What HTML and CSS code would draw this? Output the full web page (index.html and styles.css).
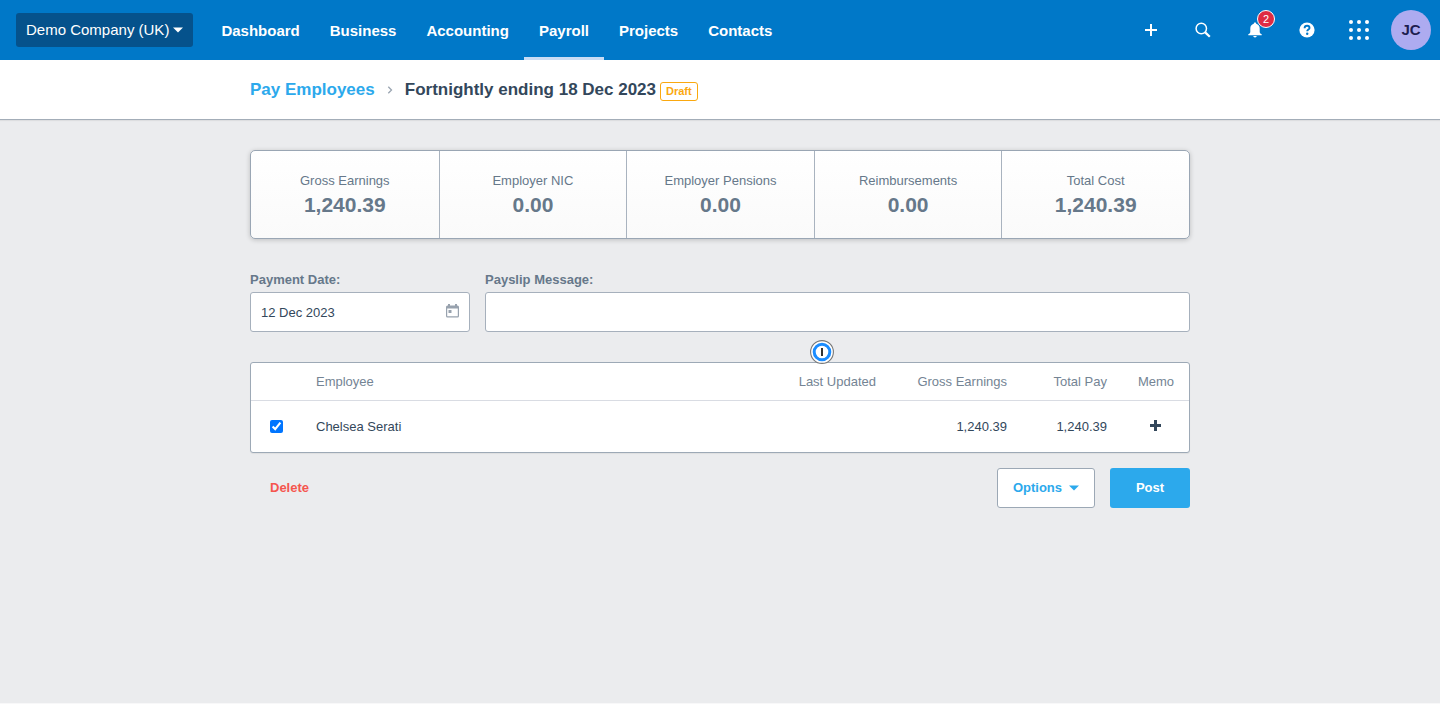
FILE: index.html
```html
<!DOCTYPE html>
<html lang="en-GB">
<head>
<meta charset="utf-8">
<title>Pay Employees</title>
<link rel="stylesheet" href="styles.css">
</head>
<body>
<header class="topbar">
  <button class="org" type="button">Demo Company (UK)
    <svg class="caret" viewBox="0 0 10 6" width="10" height="6" aria-hidden="true"><path d="M0 0.500h10L5 5.500z" fill="currentColor"/></svg>
  </button>
  <nav class="nav">
    <a href="#">Dashboard</a>
    <a href="#">Business</a>
    <a href="#">Accounting</a>
    <a href="#" class="active" aria-current="page">Payroll</a>
    <a href="#">Projects</a>
    <a href="#">Contacts</a>
  </nav>
  <div class="tools">
    <button class="tool" type="button" aria-label="Create new">
      <svg viewBox="0 0 20 20" width="20" height="20"><path d="M10 4v12M4 10h12" stroke="currentColor" stroke-width="2"/></svg>
    </button>
    <button class="tool" type="button" aria-label="Search">
      <svg viewBox="0 0 20 20" width="20" height="20" fill="none" stroke="currentColor"><circle cx="8.3" cy="8.5" r="5.2" stroke-width="1.5"/><path d="M12.2 12.4l4.6 4.4" stroke-width="2.2"/></svg>
    </button>
    <button class="tool" type="button" aria-label="Notifications">
      <svg viewBox="0 0 20 20" width="20" height="20" fill="currentColor"><path d="M10 2.600c.8 0 1.200.5 1.200 1.200 2.300.6 3.500 2.300 3.500 4.600v3.300c0 1.100.5 1.800 2 2.600v1H3.300v-1c1.500-.8 2-1.500 2-2.600V8.400c0-2.300 1.200-4 3.500-4.600 0-.7.4-1.200 1.200-1.200z"/><path d="M8.200 16h3.600c-.2.900-.8 1.400-1.800 1.400s-1.600-.5-1.800-1.400z"/></svg>
      <span class="count">2</span>
    </button>
    <button class="tool" type="button" aria-label="Help">
      <svg viewBox="0 0 20 20" width="20" height="20"><circle cx="10" cy="10" r="7.600" fill="currentColor"/><path d="M7.600 8.200c0-1.500 1-2.400 2.500-2.400s2.400.9 2.400 2.100c0 1.700-2.300 1.700-2.300 3.400" fill="none" stroke="#0078c8" stroke-width="1.900"/><circle cx="10.200" cy="13.700" r="1.200" fill="#0078c8"/></svg>
    </button>
    <button class="tool" type="button" aria-label="Apps">
      <svg viewBox="0 0 20 20" width="20" height="20" overflow="visible" fill="currentColor"><circle cx="2" cy="2" r="2"/><circle cx="10" cy="2" r="2"/><circle cx="18" cy="2" r="2"/><circle cx="2" cy="10" r="2"/><circle cx="10" cy="10" r="2"/><circle cx="18" cy="10" r="2"/><circle cx="2" cy="18" r="2"/><circle cx="10" cy="18" r="2"/><circle cx="18" cy="18" r="2"/></svg>
    </button>
  </div>
  <button class="avatar" type="button">JC</button>
</header>

<div class="titlebar">
  <div class="container crumbs">
    <a href="#">Pay Employees</a>
    <svg class="chevron" viewBox="0 0 6 8" width="6" height="8" aria-hidden="true"><path d="M1.300.8L4.500 4 1.300 7.200" fill="none" stroke="currentColor" stroke-width="1.300"/></svg>
    <h1>Fortnightly ending 18 Dec 2023</h1>
    <span class="tag">Draft</span>
  </div>
</div>

<main class="container main">
  <dl class="summary">
    <div><dt>Gross Earnings</dt><dd>1,240.39</dd></div>
    <div><dt>Employer NIC</dt><dd>0.00</dd></div>
    <div><dt>Employer Pensions</dt><dd>0.00</dd></div>
    <div><dt>Reimbursements</dt><dd>0.00</dd></div>
    <div><dt>Total Cost</dt><dd>1,240.39</dd></div>
  </dl>

  <div class="fields">
    <div class="field">
      <label for="date">Payment Date:</label>
      <div class="control">
        <input id="date" type="text" value="12 Dec 2023">
        <svg class="calendar" viewBox="0 0 13 14" width="13" height="14" aria-hidden="true"><path d="M1.500 1.500H2V0h2v1.500h5V0h2v1.500h.5q1.500 0 1.500 1.500v9q0 1.500-1.500 1.500h-10Q0 13.500 0 12V3q0-1.500 1.500-1.500zM1.200 4.500v7.300q0 .5.500.5h9.600q.5 0 .5-.5V4.500z" fill="currentColor" fill-rule="evenodd"/><path d="M2.500 6h3v3h-3z" fill="currentColor"/></svg>
      </div>
    </div>
    <div class="field">
      <label for="message">Payslip Message:</label>
      <div class="control">
        <input id="message" type="text">
        <button class="fill-badge" type="button" aria-label="Password manager">
          <svg viewBox="0 0 24 24" width="24" height="24"><circle cx="12" cy="12" r="11.400" fill="#fff" stroke="#777" stroke-width="1.100"/><circle cx="12" cy="12" r="7.800" fill="#fff" stroke="#1a8cff" stroke-width="3"/><path d="M12 8v8" stroke="#333" stroke-width="2"/></svg>
        </button>
      </div>
    </div>
  </div>

  <div class="panel">
    <table class="employees">
      <thead>
        <tr><th class="pick"></th><th class="name">Employee</th><th class="updated">Last Updated</th><th class="gross">Gross Earnings</th><th class="total">Total Pay</th><th class="memo">Memo</th></tr>
      </thead>
      <tbody>
        <tr>
          <td class="pick"><input type="checkbox" checked aria-label="Select Chelsea Serati"></td>
          <td class="name">Chelsea Serati</td>
          <td class="updated"></td>
          <td class="gross">1,240.39</td>
          <td class="total">1,240.39</td>
          <td class="memo"><button type="button" aria-label="Add memo"><svg viewBox="0 0 11 11" width="11" height="11"><path d="M5.500 0v11M0 5.500h11" stroke="currentColor" stroke-width="3"/></svg></button></td>
        </tr>
      </tbody>
    </table>
  </div>

  <div class="actions">
    <button class="delete" type="button">Delete</button>
    <button class="btn options" type="button">Options
      <svg viewBox="0 0 10 6" width="10" height="6" aria-hidden="true"><path d="M0 0.500h10L5 5.500z" fill="currentColor"/></svg>
    </button>
    <button class="btn post" type="button">Post</button>
  </div>
</main>
</body>
</html>
```
FILE: styles.css
```css
* { box-sizing: border-box; }

body {
  min-height: 100vh;
  margin: 0;
  border-bottom: 1px solid #f8f8f9;
  background: #ebecee;
  color: #33475b;
  font: 13px/20px "Liberation Sans", Arial, sans-serif;
}

button, input { font: inherit; color: inherit; }
button { padding: 0; border: 0; background: none; cursor: pointer; }
a { text-decoration: none; }
svg { display: block; flex: none; }

.container {
  max-width: 940px;
  margin: 0 auto;
}

/* Top navigation */
.topbar {
  display: flex;
  align-items: center;
  height: 60px;
  padding: 0 9px 0 16px;
  background: #0078c8;
  color: #fff;
}

.org {
  display: flex;
  align-items: center;
  gap: 4px;
  height: 34px;
  padding: 0 10px;
  border-radius: 3px;
  background: #05528c;
  font-size: 15px;
  white-space: nowrap;
}

.nav {
  display: flex;
  margin-left: 13px;
}

.nav a {
  height: 60px;
  padding: 0 15px;
  border-bottom: 3px solid transparent;
  color: #fff;
  font-size: 15px;
  font-weight: bold;
  line-height: 61px;
}

.nav .active { border-bottom-color: #c8dcf5; }

.tools {
  display: flex;
  gap: 12px;
  margin-left: auto;
}

.tool {
  position: relative;
  display: grid;
  place-items: center;
  width: 40px;
  height: 40px;
}

.count {
  position: absolute;
  top: 0;
  right: 0;
  width: 18px;
  height: 18px;
  border: 1px solid #fff;
  border-radius: 50%;
  background: #de2b43;
  font-size: 11px;
  line-height: 16px;
}

.avatar {
  width: 40px;
  height: 40px;
  margin-left: 12px;
  border-radius: 50%;
  background: #adabf0;
  color: #1e1e50;
  font-size: 15px;
  font-weight: bold;
}

/* Page heading */
.titlebar {
  background: #fff;
  border-bottom: 1px solid #a3adb8;
  box-shadow: 0 1px 1px rgba(0, 0, 0, 0.06);
}

.crumbs {
  display: flex;
  align-items: center;
  height: 59px;
  font-size: 17px;
  font-weight: bold;
}

.crumbs a { color: #2ca9ec; }
.chevron { margin: 0 12px; color: #9aa5b1; }
.crumbs h1 { margin: 0; font-size: inherit; line-height: inherit; }

.tag {
  margin: 4px 0 0 4px;
  padding: 0 5px;
  border: 1px solid #faa80f;
  border-radius: 3px;
  color: #faa80f;
  font-size: 11px;
  line-height: 17px;
}

/* Totals */
.main { padding: 30px 0; }

.summary {
  display: grid;
  grid-template-columns: repeat(5, 1fr);
  margin: 0 0 30px;
  border: 1px solid #9aa6b4;
  border-radius: 5px;
  background: linear-gradient(#fff, #fafafa);
  box-shadow: 0 1px 5px rgba(0, 0, 0, 0.2);
  color: #66788a;
  text-align: center;
}

.summary div { padding: 20px 0 19px; }
.summary div + div { border-left: 1px solid #a9b3bf; }
.summary dd {
  margin: 0;
  font-size: 21px;
  font-weight: bold;
  line-height: 28px;
}

/* Form fields */
.fields {
  display: grid;
  grid-template-columns: 220px 1fr;
  gap: 15px;
  margin-bottom: 30px;
}

.field label {
  display: block;
  padding-top: 1px;
  margin-bottom: 2px;
  color: #66788a;
  font-weight: bold;
}

.control { position: relative; }

.control input {
  display: block;
  width: 100%;
  height: 40px;
  padding: 0 10px;
  border: 1px solid #a6b0bc;
  border-radius: 3px;
  background: #fff;
}

.calendar {
  position: absolute;
  top: 12px;
  right: 11px;
  color: #98a2ae;
}

.fill-badge {
  position: absolute;
  top: 48px;
  left: 325px;
}

/* Employees table */
.panel {
  border: 1px solid #9da9b6;
  border-radius: 3px;
  background: #fff;
  box-shadow: 0 1px 1px rgba(0, 0, 0, 0.06);
}

.employees {
  width: 100%;
  border-collapse: separate;
  border-spacing: 0;
  table-layout: fixed;
}

.employees th {
  height: 38px;
  padding: 0;
  border-bottom: 1px solid #d9dce3;
  color: #748494;
  font-weight: normal;
}

.employees td { height: 51px; padding: 0; }
.employees .pick { width: 65px; padding-left: 19px; text-align: left; }
.employees .name { text-align: left; }
.employees .updated { width: 100px; text-align: right; }
.employees .gross { width: 131px; text-align: right; }
.employees .total { width: 100px; text-align: right; }
.employees .memo { width: 82px; padding-right: 15px; text-align: right; }
.employees td.memo { padding-right: 28px; }
.employees .memo button { display: inline-block; }

.pick input {
  display: block;
  width: 13px;
  height: 13px;
  margin: 0;
  accent-color: #0075ff;
}

/* Footer actions */
.actions {
  display: flex;
  gap: 15px;
  margin-top: 15px;
  font-weight: bold;
}

.delete {
  margin-right: auto;
  padding: 0 20px;
  color: #f5564e;
}

.btn {
  display: flex;
  align-items: center;
  justify-content: center;
  height: 40px;
  border-radius: 3px;
}

.options {
  gap: 7px;
  padding: 0 15px;
  border: 1px solid #9ca8b5;
  background: #fff;
  color: #2ca9ec;
}

.post {
  min-width: 80px;
  background: #2ca9ec;
  color: #fff;
}
```
